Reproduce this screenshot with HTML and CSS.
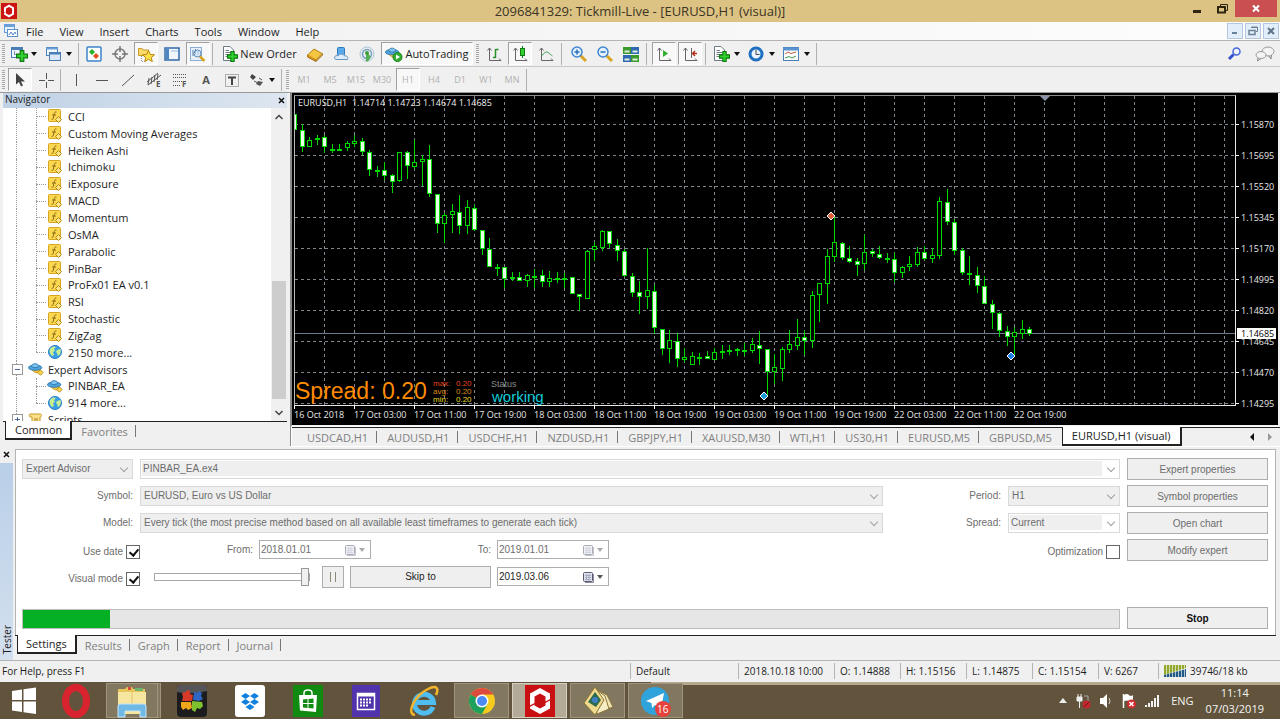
FILE: index.html
```html
<!DOCTYPE html>
<html lang="en">
<head>
    <meta charset="UTF-8">
    <meta name="viewport" content="width=device-width, initial-scale=1.0">
    <title>2096841329: Tickmill-Live - [EURUSD,H1 (visual)]</title>
    <link rel="stylesheet" href="styles.css">
</head>
<body>
    <!-- shared icons -->
    <svg class="defs" aria-hidden="true">
        <symbol id="i-logo" viewBox="0 0 16 16">
            <rect width="16" height="16" fill="#cc1414"/>
            <path d="M8 1.5 13 4.5V8L11 7V5.6L8 3.9 5 5.6V8.5L3 9.6V4.5Z" fill="#fff"/>
            <path d="M8 14.5 3 11.5V10L5 9V10.4L8 12.1 11 10.4V7.5L13 6.4V11.5Z" fill="#fff"/>
            <circle cx="8" cy="8" r="1.8" fill="#cc1414"/>
        </symbol>
        <symbol id="i-func" viewBox="0 0 16 16">
            <rect x="1.5" y="1.5" width="12" height="12" rx="1" fill="#fbd84f" stroke="#d9a520"/>
            <path d="M9.5 4C8 3.4 7.4 4.6 7 7L6.4 10C6.1 11.4 5.5 11.6 4.6 11.3M5 7H9" fill="none" stroke="#8a6a18"/>
            <path d="M11.5 8.5 14.5 11.5 11.5 14.5 8.5 11.5Z" fill="#fbe58a" stroke="#b8860b"/>
        </symbol>
        <symbol id="i-globe" viewBox="0 0 16 16">
            <circle cx="8" cy="8" r="6.5" fill="#3aa0e6" stroke="#2a7fc4"/>
            <path d="M3 5C5 2 8 2 9 3L7 5 8 7 6 8 7 11 5 12C3 10 2 8 3 5ZM10 6 13.5 5C14.5 8 13 11 11 12L10 9 9 8Z" fill="#c9ee8f"/>
        </symbol>
        <symbol id="i-expert" viewBox="0 0 18 16">
            <path d="M4 8C6 12 11 14 14 11L13 7Z" fill="#f3c63c" stroke="#c9951a"/>
            <ellipse cx="8" cy="6.5" rx="7.5" ry="3" fill="#4fa3dc" stroke="#2d77ad"/>
            <path d="M4 5C4 1 12 1 12 5C10 7 6 7 4 5Z" fill="#7cc3ef" stroke="#2d77ad"/>
            <path d="M14 9 17 12 14 15 11 12Z" fill="#fbd84f" stroke="#b8860b"/>
        </symbol>
        <symbol id="i-script" viewBox="0 0 16 16">
            <path d="M2 2H12C14 2 14 5 12 5V13C12 14.5 5 14.5 4 13V5H2C1 5 1 2 2 2Z" fill="#fbe08a" stroke="#c99a25"/>
            <path d="M6 7H10M6 9H10" stroke="#a67c1a"/>
        </symbol>
        <symbol id="i-plus" viewBox="0 0 10 10">
            <path d="M3.5 .5H6.5V3.5H9.5V6.5H6.5V9.5H3.5V6.5H.5V3.5H3.5Z" fill="#2fd12f" stroke="#0d7a0d"/>
        </symbol>
        <symbol id="i-page" viewBox="0 0 16 16">
            <path d="M1.5 .5H8L11.5 4V14.5H1.5Z" fill="#fff" stroke="#6b7a86"/>
            <path d="M3.5 4.5H7M3.5 6.5H9M3.5 8.5H9M3.5 10.5H7" stroke="#6b7a86"/>
        </symbol>
        <symbol id="i-calendar" viewBox="0 0 12 12">
            <rect x=".5" y="1.5" width="9" height="9" rx="1" fill="#dfe2ee" stroke="#5a5a70"/>
            <path d="M2 4.5H8M2 6.5H8M2 8.5H8M3.5 3V9.5M6 3V9.5" stroke="#a9adc4"/>
            <path d="M10.5 3V11.5H2" fill="none" stroke="#8a8aa0"/>
        </symbol>
    </svg>

    <header class="titlebar">
        <svg class="titlebar-logo"><use href="#i-logo"/></svg>
        <h1>2096841329: Tickmill-Live - [EURUSD,H1 (visual)]</h1>
        <div class="window-buttons">
            <button aria-label="Minimize"><svg width="24" height="18"><path d="M6 11.5H14" stroke="#2e2612" stroke-width="3"/></svg></button>
            <button aria-label="Restore"><svg width="24" height="18"><path d="M9.5 6V4.5H16.5V10.5H15" fill="none" stroke="#2e2612"/><rect x="7" y="7" width="7" height="5.5" fill="none" stroke="#2e2612" stroke-width="2"/></svg></button>
            <button class="close" aria-label="Close"><svg width="42" height="17"><path d="M18 5.5 24 11.5M24 5.5 18 11.5" stroke="#fff" stroke-width="2"/></svg></button>
        </div>
    </header>

    <nav class="menubar">
        <svg class="menu-icon" viewBox="0 0 16 16">
            <rect x="1.5" y="1.5" width="10" height="8" fill="#eaf3fd" stroke="#6a9fd8"/>
            <path d="M1 3H12" stroke="#6a9fd8" stroke-width="2"/>
            <rect x="4.5" y="6.5" width="10" height="7" fill="#fff" stroke="#5a92d0"/>
            <path d="M6 12 8 9 10 12 12 9 13 11" fill="none" stroke="#4d86c8"/>
        </svg>
        <button>File</button>
        <button>View</button>
        <button>Insert</button>
        <button>Charts</button>
        <button>Tools</button>
        <button>Window</button>
        <button>Help</button>
        <div class="mdi-buttons">
            <button aria-label="Minimize chart"><svg width="14" height="14"><path d="M4 9H9" stroke="#6b8197" stroke-width="2"/></svg></button>
            <button aria-label="Restore chart"><svg width="14" height="14"><path d="M5.5 4V3H11.5V7.5H10M5 3.5H12" fill="none" stroke="#6b8197"/><rect x="3" y="6.5" width="6" height="4" fill="none" stroke="#6b8197" stroke-width="1.5"/></svg></button>
            <button aria-label="Close chart"><svg width="14" height="14"><path d="M4 4 10 10M10 4 4 10" stroke="#5f7489" stroke-width="2"/></svg></button>
        </div>
    </nav>

    <div class="toolbar">
        <span class="grip"></span>
        <button class="tool drop" aria-label="New chart"><svg width="18" height="16"><rect x="1.5" y="1.5" width="11" height="10" fill="#eef5fc" stroke="#4a7fb5"/><path d="M1 3H13" stroke="#4a7fb5" stroke-width="2"/><path d="M4.5 5V9M4 8.5H7" stroke="#7b97b3" fill="none"/><use href="#i-plus" x="6" y="4" width="12" height="12"/></svg></button>
        <button class="tool drop" aria-label="Profiles"><svg width="18" height="16"><rect x="1.5" y="1.5" width="11" height="8" fill="#f4f9ff" stroke="#4a7fb5"/><path d="M1 2.5H13" stroke="#6a9fd8" stroke-width="2"/><rect x="4.5" y="6.5" width="11" height="8" fill="#dce8f6" stroke="#4a7fb5"/><path d="M4 7.5H16" stroke="#4a7fb5" stroke-width="2"/></svg></button>
        <span class="sep"></span>
        <button class="tool" aria-label="Market Watch"><svg width="16" height="16"><rect x="1" y="1" width="14" height="14" rx="1" fill="#fff" stroke="#3d84cc" stroke-width="1.5"/><path d="M6 3 9 6 6 9 3 6Z" fill="#27b127"/><path d="M10 7 13 10 10 13 7 10Z" fill="#e0501e"/></svg></button>
        <button class="tool" aria-label="Data Window"><svg width="16" height="16"><circle cx="8" cy="8" r="5" fill="none" stroke="#777" stroke-width="1.5"/><path d="M8 0V6M8 10V16M0 8H6M10 8H16" stroke="#777" stroke-width="1.5"/></svg></button>
        <button class="tool pressed" aria-label="Navigator"><svg width="18" height="16"><path d="M1.5 2.5H5L6 4H11.5V9.5H1.5Z" fill="#fbdc6a" stroke="#c99a25"/><path d="M4.5 10V15.5H8" stroke="#999" stroke-dasharray="1 1" fill="none"/><path d="M11.5 4.5 13.3 8.4 17.5 8.8 14.3 11.5 15.3 15.5 11.5 13.3 7.8 15.5 8.7 11.5 5.5 8.8 9.8 8.4Z" fill="#ffe04a" stroke="#b8860b"/></svg></button>
        <button class="tool" aria-label="Terminal"><svg width="16" height="16"><rect x="1" y="2" width="14" height="12" fill="#f0f6fd" stroke="#2f68a8" stroke-width="1.5"/><rect x="2" y="3" width="3" height="10" fill="#4e86c2"/><path d="M7 5H14" stroke="#9cbbe0"/></svg></button>
        <button class="tool pressed" aria-label="Strategy Tester"><svg width="18" height="16"><rect x="1.5" y="1.5" width="11" height="13" fill="#e8f1fb" stroke="#8aaed4"/><path d="M4 4V10M6.5 3V8M9 5V9" stroke="#557a9f"/><circle cx="8.5" cy="7.5" r="3.5" fill="#d6eafe" fill-opacity=".6" stroke="#5b87b5"/><path d="M11 10.5 15.5 15" stroke="#d9a520" stroke-width="2.5"/></svg></button>
        <span class="sep"></span>
        <button class="tool wide"><svg width="16" height="16"><use href="#i-page" width="16" height="16"/><use href="#i-plus" x="5" y="5" width="11" height="11"/></svg>New Order</button>
        <button class="tool" aria-label="MetaEditor"><svg width="16" height="16"><path d="M.5 9 7 3 15 7.5 9 14Z" fill="#f5c542" stroke="#b57f14"/><path d="M.5 9V11L9 15.5V14M9 15.5 15.5 9V7.5" fill="#d8951f" stroke="#a56e10"/></svg></button>
        <button class="tool" aria-label="Community"><svg width="16" height="16"><rect x="4.5" y="1.5" width="7" height="8" rx="1" fill="#5aa9e8" stroke="#2f78ba"/><path d="M1.5 12C1.5 9.5 4 9 5 10C6 7.5 11 7.5 11.5 10C14 9.5 15.5 11 14.5 13.5H2.5Z" fill="#dcecfa" stroke="#6a95bd"/></svg></button>
        <button class="tool" aria-label="Signals"><svg width="16" height="16"><circle cx="8" cy="8" r="7" fill="none" stroke="#a9c3d6"/><circle cx="8" cy="8" r="4.5" fill="none" stroke="#6f9cc0" stroke-width="1.5"/><path d="M8 6 12 11 9 15.5 7 15.5V9Z" fill="#53b053"/><circle cx="8" cy="7" r="2" fill="#3d9a3d"/></svg></button>
        <button class="tool wide pressed auto"><svg width="18" height="16"><use href="#i-expert" width="16" height="15"/><circle cx="12.5" cy="11" r="4.5" fill="#2fae2f" stroke="#1d7f1d"/><path d="M11 8.5 15 11 11 13.5Z" fill="#fff"/></svg>AutoTrading</button>
        <span class="grip"></span>
        <button class="tool" aria-label="Bar chart"><svg width="16" height="16"><path d="M3.5 2V14.5H15M1.5 4.5 3.5 2 5.5 4.5M13 12.5 15 14.5" fill="none" stroke="#666"/><path d="M9.5 3V12M9.5 3.5H12.5M7 11.5H9.5" stroke="#2a8f2a" stroke-width="1.5"/></svg></button>
        <button class="tool pressed" aria-label="Candlesticks"><svg width="16" height="16"><path d="M3.5 2V14.5H15M1.5 4.5 3.5 2 5.5 4.5M13 12.5 15 14.5" fill="none" stroke="#666"/><path d="M10.5 0V12" stroke="#157a15"/><rect x="8.5" y="2.5" width="4" height="7" fill="#2fd12f" stroke="#157a15"/></svg></button>
        <button class="tool" aria-label="Line chart"><svg width="16" height="16"><path d="M3.5 2V14.5H15M1.5 4.5 3.5 2 5.5 4.5M13 12.5 15 14.5" fill="none" stroke="#666"/><path d="M3.5 10C6 7 8 5 10 6.5S13 9 14.5 10" fill="none" stroke="#3b9a4b"/></svg></button>
        <span class="sep gap"></span>
        <button class="tool" aria-label="Zoom in"><svg width="16" height="16"><path d="M9.5 9.5 15 15" stroke="#d9a520" stroke-width="3"/><circle cx="6" cy="6" r="5" fill="#e3f1fe" stroke="#4187cf" stroke-width="1.5"/><path d="M3.5 6H8.5M6 3.5V8.5" stroke="#2c6fb8" stroke-width="1.5"/></svg></button>
        <button class="tool" aria-label="Zoom out"><svg width="16" height="16"><path d="M9.5 9.5 15 15" stroke="#d9a520" stroke-width="3"/><circle cx="6" cy="6" r="5" fill="#e3f1fe" stroke="#4187cf" stroke-width="1.5"/><path d="M3.5 6H8.5" stroke="#2c6fb8" stroke-width="1.5"/></svg></button>
        <button class="tool" aria-label="Tile windows"><svg width="16" height="16"><rect x="0" y="1" width="8" height="7" fill="#3c9a2c"/><rect x="8" y="1" width="8" height="7" fill="#2f68b0"/><rect x="0" y="9" width="8" height="7" fill="#2f68b0"/><rect x="8" y="9" width="8" height="7" fill="#3c9a2c"/><path d="M1.5 5.5H6.5M9.5 5.5H14.5M1.5 13.5H6.5M9.5 13.5H14.5" stroke="#dff0e0" stroke-width="2"/></svg></button>
        <span class="sep gap"></span>
        <button class="tool pressed" aria-label="Auto scroll"><svg width="16" height="16"><path d="M3.5 2V14.5H15M1.5 4.5 3.5 2 5.5 4.5M13 12.5 15 14.5" fill="none" stroke="#666"/><path d="M7 4 12 7.5 7 11Z" fill="#2fae2f"/></svg></button>
        <button class="tool pressed" aria-label="Chart shift"><svg width="16" height="16"><path d="M3.5 2V14.5H15M1.5 4.5 3.5 2 5.5 4.5M13 12.5 15 14.5M9.5 2V12" fill="none" stroke="#666"/><path d="M15 7.5H11M13 5 10.5 7.5 13 10" fill="none" stroke="#b8321e" stroke-width="1.5"/></svg></button>
        <span class="sep gap"></span>
        <button class="tool drop" aria-label="Indicators"><svg width="18" height="16"><use href="#i-page" width="16" height="16"/><use href="#i-plus" x="6" y="5" width="11" height="11"/></svg></button>
        <button class="tool drop" aria-label="Periods"><svg width="18" height="16"><circle cx="8" cy="8" r="6" fill="#eaf4fe" stroke="#1f6fc0" stroke-width="3"/><path d="M8 4V8.5H11.5" fill="none" stroke="#444"/></svg></button>
        <button class="tool drop" aria-label="Templates"><svg width="18" height="16"><rect x=".5" y="1.5" width="15" height="13" fill="#fff" stroke="#4a7fb5"/><path d="M0 3H16" stroke="#5a94d0" stroke-width="3"/><path d="M2 8 5 6 8 7.5 13 6" fill="none" stroke="#c0603a"/><path d="M2 12 6 10.5 9 12 13 10" fill="none" stroke="#3b9a4b"/></svg></button>
        <span class="sep"></span>
        <div class="toolbar-right">
            <button class="tool" aria-label="Search"><svg width="16" height="16"><circle cx="9.5" cy="5.5" r="3.5" fill="#eef3ff" stroke="#4668d8" stroke-width="1.5"/><path d="M6.5 8.5 2 13" stroke="#3552cc" stroke-width="3"/></svg></button>
            <button class="tool" aria-label="Chat"><svg width="20" height="16"><ellipse cx="13" cy="5.5" rx="6" ry="4.5" fill="#f4f4f4" stroke="#999"/><path d="M14 10 16 13 16.5 9" fill="#ddd" stroke="#888"/><ellipse cx="6" cy="9" rx="5" ry="3.5" fill="#f4f4f4" stroke="#999"/><path d="M3 12 2.5 15 6 12.5" fill="#ddd" stroke="#888"/></svg></button>
        </div>
    </div>

    <div class="toolbar second">
        <span class="grip"></span>
        <button class="tool pressed" aria-label="Cursor"><svg width="16" height="16"><path d="M4 1V12.5L7 10 9 14.5 11 13.5 9 9.5H13Z" fill="#444"/></svg></button>
        <button class="tool" aria-label="Crosshair"><svg width="16" height="16"><path d="M8.5 1V7M8.5 10V16M1 8.5H7M10 8.5H16" stroke="#555"/></svg></button>
        <span class="sep"></span>
        <button class="tool" aria-label="Vertical line"><svg width="16" height="16"><path d="M8.5 2V14" stroke="#555"/></svg></button>
        <button class="tool" aria-label="Horizontal line"><svg width="16" height="16"><path d="M2 8.5H14" stroke="#555"/></svg></button>
        <button class="tool" aria-label="Trendline"><svg width="16" height="16"><path d="M2 14 14 3" stroke="#555"/></svg></button>
        <button class="tool" aria-label="Equidistant channel"><svg width="16" height="16"><path d="M1 10 12 1M2 13 15 3M3 6 2 13M6 5 5 12M9 3 8 10M12 2 11 8" stroke="#555"/><text x="10" y="15" font-size="8">E</text></svg></button>
        <button class="tool" aria-label="Fibonacci"><svg width="16" height="16"><path d="M1 2.5H15M1 5.5H15M1 9.5H15M1 13.5H9" stroke="#555" stroke-dasharray="1 1"/><text x="10" y="15" font-size="8">F</text></svg></button>
        <button class="tool letter">A</button>
        <button class="tool" aria-label="Text label"><svg width="16" height="16"><rect x="1.500" y="2.500" width="13" height="12" fill="none" stroke="#666" stroke-dasharray="1 1"/><path d="M4 5.500H12M8 5V13" stroke="#444" stroke-width="2"/></svg></button>
        <button class="tool drop" aria-label="Arrows"><svg width="18" height="16"><path d="M4 2 8 5 5 8 2 5Z" fill="#444"/><path d="M6 9 10 11M11 6 14 8" stroke="#555"/><path d="M10 9 15 10 12 14 8 12Z" fill="#555"/></svg></button>
        <span class="sep"></span>
        <span class="grip"></span>
        <button class="tool period">M1</button>
        <button class="tool period">M5</button>
        <button class="tool period">M15</button>
        <button class="tool period">M30</button>
        <button class="tool period pressed">H1</button>
        <button class="tool period">H4</button>
        <button class="tool period">D1</button>
        <button class="tool period">W1</button>
        <button class="tool period">MN</button>
        <span class="sep"></span>
    </div>

    <main class="workspace">
        <aside class="navigator">
            <div class="panel-head"><h2>Navigator</h2><button aria-label="Close Navigator"><svg width="7" height="7"><path d="M1 1 6 6M6 1 1 6" stroke="#111" stroke-width="1.5"/></svg></button></div>
            <div class="tree-wrap">
                <ul class="tree">
                    <li class="leaf"><svg><use href="#i-func"/></svg>CCI</li>
                    <li class="leaf"><svg><use href="#i-func"/></svg>Custom Moving Averages</li>
                    <li class="leaf"><svg><use href="#i-func"/></svg>Heiken Ashi</li>
                    <li class="leaf"><svg><use href="#i-func"/></svg>Ichimoku</li>
                    <li class="leaf"><svg><use href="#i-func"/></svg>iExposure</li>
                    <li class="leaf"><svg><use href="#i-func"/></svg>MACD</li>
                    <li class="leaf"><svg><use href="#i-func"/></svg>Momentum</li>
                    <li class="leaf"><svg><use href="#i-func"/></svg>OsMA</li>
                    <li class="leaf"><svg><use href="#i-func"/></svg>Parabolic</li>
                    <li class="leaf"><svg><use href="#i-func"/></svg>PinBar</li>
                    <li class="leaf"><svg><use href="#i-func"/></svg>ProFx01 EA v0.1</li>
                    <li class="leaf"><svg><use href="#i-func"/></svg>RSI</li>
                    <li class="leaf"><svg><use href="#i-func"/></svg>Stochastic</li>
                    <li class="leaf"><svg><use href="#i-func"/></svg>ZigZag</li>
                    <li class="leaf last"><svg><use href="#i-globe"/></svg>2150 more...</li>
                    <li class="branch"><svg><use href="#i-expert"/></svg>Expert Advisors</li>
                    <li class="leaf"><svg><use href="#i-expert"/></svg>PINBAR_EA</li>
                    <li class="leaf last"><svg><use href="#i-globe"/></svg>914 more...</li>
                    <li class="branch closed"><svg><use href="#i-script"/></svg>Scripts</li>
                </ul>
                <div class="scrollbar">
                    <svg width="10" height="8"><path d="M1.5 6 5 2.5 8.5 6" fill="none" stroke="#444" stroke-width="1.5"/></svg>
                    <span class="thumb"></span>
                    <svg width="10" height="8"><path d="M1.5 2 5 5.5 8.5 2" fill="none" stroke="#444" stroke-width="1.5"/></svg>
                </div>
            </div>
            <div class="tabs nav-tabs">
                <button class="tab active">Common</button>
                <button class="tab">Favorites</button>
            </div>
        </aside>

        <section class="chart-area">
            <div class="chart">
                <div class="plot">
                    <svg class="plot-svg">
                        <g transform="translate(-295 -96)">
                            <g id="grid"></g>
                            <path d="M295 333.5H3000" stroke="#6c7c8c"/>
                            <g id="candles"></g>
                            <path d="M1040 96H1050L1045 101Z" fill="#8c93a8"/>
                            <g stroke="#fff">
                                <path d="M831 212 835 216 831 220 827 216Z" fill="#e0603c"/>
                                <path d="M764 392 768 396 764 400 760 396Z" fill="#1b9ad6"/>
                                <path d="M1011 352 1015 356 1011 360 1007 356Z" fill="#1e7fe0"/>
                            </g>
                            <text class="quote" x="298" y="106">EURUSD,H1&#160; 1.14714 1.14723 1.14674 1.14685</text>
                            <text class="spread" x="295" y="399">Spread: 0.20</text>
                            <g class="stat">
                                <text x="433" y="386" fill="#e8421a">max:</text><text x="456" y="386" fill="#e8421a">0.20</text>
                                <text x="433" y="394" fill="#dc8a12">avg:</text><text x="456" y="394" fill="#dc8a12">0.20</text>
                                <text x="433" y="402" fill="#e6dc1e">min:</text><text x="456" y="402" fill="#e6dc1e">0.20</text>
                            </g>
                            <text class="status-label" x="491" y="387">Status</text>
                            <text class="status-value" x="492" y="402">working</text>
                        </g>
                    </svg>
                </div>
                <div class="price-axis">
                    <span>1.15870</span><span>1.15695</span><span>1.15520</span><span>1.15345</span><span>1.15170</span>
                    <span>1.14995</span><span>1.14820</span><span>1.14645</span><span>1.14470</span><span>1.14295</span>
                    <b class="price-now">1.14685</b>
                </div>
                <div class="time-axis">
                    <span>16 Oct 2018</span><span>17 Oct 03:00</span><span>17 Oct 11:00</span><span>17 Oct 19:00</span>
                    <span>18 Oct 03:00</span><span>18 Oct 11:00</span><span>18 Oct 19:00</span><span>19 Oct 03:00</span>
                    <span>19 Oct 11:00</span><span>19 Oct 19:00</span><span>22 Oct 03:00</span><span>22 Oct 11:00</span><span>22 Oct 19:00</span>
                </div>
            </div>
            <div class="tabs chart-tabs">
                <button class="tab">USDCAD,H1</button>
                <button class="tab">AUDUSD,H1</button>
                <button class="tab">USDCHF,H1</button>
                <button class="tab">NZDUSD,H1</button>
                <button class="tab">GBPJPY,H1</button>
                <button class="tab">XAUUSD,M30</button>
                <button class="tab">WTI,H1</button>
                <button class="tab">US30,H1</button>
                <button class="tab">EURUSD,M5</button>
                <button class="tab plain">GBPUSD,M5</button>
                <button class="tab active">EURUSD,H1 (visual)</button>
                <div class="tab-scroll">
                    <svg width="6" height="8"><path d="M5 0V8L1 4Z" fill="#111"/></svg>
                    <svg width="6" height="8"><path d="M1 0V8L5 4Z" fill="#999"/></svg>
                </div>
            </div>
        </section>
    </main>

    <section class="tester">
        <div class="rail">
            <button aria-label="Close Tester"><svg width="7" height="7"><path d="M1 1 6 6M6 1 1 6" stroke="#111" stroke-width="1.5"/></svg></button>
            <h2>Tester</h2>
        </div>
        <div class="tester-body">
            <form class="settings">
                <div class="fields">
                    <div class="row">
                        <span class="select kind"><select aria-label="Type" disabled><option>Expert Advisor</option></select></span>
                        <span class="select grow white"><select aria-label="Expert" disabled><option>PINBAR_EA.ex4</option></select></span>
                    </div>
                    <div class="row">
                        <label class="caption" for="symbol">Symbol:</label>
                        <span class="select grow"><select id="symbol" disabled><option>EURUSD, Euro vs US Dollar</option></select></span>
                        <label class="caption" for="period">Period:</label>
                        <span class="select small"><select id="period" disabled><option>H1</option></select></span>
                    </div>
                    <div class="row">
                        <label class="caption" for="model">Model:</label>
                        <span class="select grow"><select id="model" disabled><option>Every tick (the most precise method based on all available least timeframes to generate each tick)</option></select></span>
                        <label class="caption" for="spread">Spread:</label>
                        <span class="select small white"><select id="spread" disabled><option>Current</option></select></span>
                    </div>
                    <div class="row dates">
                        <label class="check">Use date <input type="checkbox" checked></label>
                        <label class="caption" for="from">From:</label>
                        <span class="date off"><input id="from" type="text" value="2018.01.01" disabled><svg width="12" height="12"><use href="#i-calendar"/></svg></span>
                        <label class="caption to" for="to">To:</label>
                        <span class="date off"><input id="to" type="text" value="2019.01.01" disabled><svg width="12" height="12"><use href="#i-calendar"/></svg></span>
                        <label class="check optimize">Optimization <input type="checkbox"></label>
                    </div>
                    <div class="row visual">
                        <label class="check">Visual mode <input type="checkbox" checked></label>
                        <input class="speed" type="range" value="100" aria-label="Speed">
                        <button type="button" class="btn pause" aria-label="Pause"><svg width="8" height="10"><path d="M1.5 0V10M6.5 0V10" stroke="#8b8878"/></svg></button>
                        <button type="button" class="btn skip">Skip to</button>
                        <span class="date"><input type="text" value="2019.03.06" aria-label="Skip to date"><svg width="12" height="12"><use href="#i-calendar"/></svg></span>
                    </div>
                    <progress value="79" max="1000"></progress>
                </div>
                <div class="actions">
                    <button type="button" class="btn" disabled>Expert properties</button>
                    <button type="button" class="btn" disabled>Symbol properties</button>
                    <button type="button" class="btn" disabled>Open chart</button>
                    <button type="button" class="btn" disabled>Modify expert</button>
                    <button type="button" class="btn stop">Stop</button>
                </div>
            </form>
            <div class="tabs tester-tabs">
                <button class="tab active">Settings</button>
                <button class="tab">Results</button>
                <button class="tab">Graph</button>
                <button class="tab">Report</button>
                <button class="tab">Journal</button>
            </div>
        </div>
    </section>

    <footer class="statusbar">
        <span class="help">For Help, press F1</span>
        <span class="cell w108">Default</span>
        <span class="cell w96">2018.10.18 10:00</span>
        <span class="cell w66">O: 1.14888</span>
        <span class="cell w66">H: 1.15156</span>
        <span class="cell w66">L: 1.14875</span>
        <span class="cell w66">C: 1.15154</span>
        <span class="cell w60">V: 6267</span>
        <span class="cell w122"><svg width="22" height="12"><path d="M0 0H22V3L0 10Z" fill="#93a92b"/><path d="M0 12V10L22 4V12Z" fill="#215a86"/><path d="M2.5 0V12M5.5 0V12M8.5 0V12M11.5 0V12M14.5 0V12M17.5 0V12M20.5 0V12" stroke="#f0f0f0" stroke-opacity=".7"/></svg>39746/18 kb</span>
    </footer>

    <div class="taskbar">
        <button class="start" aria-label="Start"><svg width="26" height="32"><path d="M1 6 11 4.5V15H1ZM12.5 4.3 25 2.5V15H12.5ZM1 16.5H11V27L1 25.5ZM12.5 16.5H25V29L12.5 27.2Z" fill="#fff"/></svg></button>
        <button class="app" aria-label="Opera"><svg width="30" height="34"><ellipse cx="15" cy="17" rx="10.5" ry="13.5" fill="none" stroke="#d9232e" stroke-width="7"/></svg></button>
        <button class="app open stack" aria-label="File Explorer"><svg width="32" height="34"><path d="M2 5H9L11 3H16L17 5H29V28H2Z" fill="#e9c65c"/><path d="M12 3H15V6H12Z" fill="#d24a3a"/><path d="M19 4H27V7H19Z" fill="#6db36d"/><path d="M2 8H30V30H2Z" fill="#f7e6a0"/><path d="M16 8V20" stroke="#e0c46a"/><path d="M2 33V22Q2 20 4 20H28Q30 20 30 22V33H24V27H9V33Z" fill="#6fb9e4" stroke="#c7e5f5"/></svg></button>
        <button class="app" aria-label="AVG"><svg width="30" height="34"><rect y="1" width="30" height="32" rx="4" fill="#1c1c1e"/><path d="M0 5Q0 1 4 1H26Q30 1 30 5V7Q15 11 0 8Z" fill="#55555a"/><path d="M5 9 9 8 10 6 13 7 13 10 16 11 15 17 5 17 6 13Z" fill="#d83a2a"/><path d="M17 8 20 9 22 7 25 9 24 12 26 15 22 17 16 16Z" fill="#2f66c4"/><path d="M4 18H14L15 24 11 26 9 24 6 26 4 23Z" fill="#efa81c"/><path d="M15 17 25 18 26 22 23 25 20 24 18 28 15 26Z" fill="#7fc02f"/></svg></button>
        <button class="app" aria-label="Dropbox"><svg width="30" height="34"><rect y="1" width="30" height="32" rx="3" fill="#fff"/><path d="M10.5 9 15 12 10.5 15 6 12ZM19.5 9 24 12 19.5 15 15 12ZM10.5 15 15 18 10.5 21 6 18ZM19.5 15 24 18 19.5 21 15 18ZM15 20 19.5 23 15 26 10.5 23Z" fill="#1081de"/></svg></button>
        <button class="app" aria-label="Store"><svg width="30" height="34"><rect y="1" width="30" height="32" fill="#108a10"/><path d="M11 12V9C11 5 19 5 19 9V12" fill="none" stroke="#fff" stroke-width="1.5"/><path d="M6 11H24L23 28 7 26.5Z" fill="#fff"/><path d="M10 15.5 14.5 15V19H10ZM15.5 15 20.5 14.5V19H15.5ZM10 20H14.5V24L10 23.5ZM15.5 20H20.5V24.6L15.5 24Z" fill="#108a10"/></svg></button>
        <button class="app" aria-label="Calendar"><svg width="30" height="34"><rect x="1" y="1" width="28" height="32" fill="#5133ab"/><rect x="6.5" y="9.5" width="17" height="16" fill="none" stroke="#fff" stroke-width="1.5"/><path d="M6 11H24" stroke="#fff" stroke-width="3"/><path d="M9 15.5H21M9 18.5H21M9 21.5H18" stroke="#fff" stroke-width="2" stroke-dasharray="2 1"/></svg></button>
        <button class="app" aria-label="Internet Explorer"><svg width="32" height="34"><path d="M25 23A9.500 9.500 0 1 1 25.500 18.500H9" fill="none" stroke="#4fbdf0" stroke-width="5"/><path d="M7 31C-2 30 6 12 20 5C29 0 31 5 28 11" fill="none" stroke="#f2b52b" stroke-width="2.500"/></svg></button>
        <button class="app open" aria-label="Chrome"><svg width="30" height="34"><circle cx="15" cy="17" r="13" fill="#f7ca1e"/><path d="M15 17 3.7 10.5A13 13 0 0 1 26.3 10.5L15 10.5Z" fill="#dd4b3e"/><path d="M3.7 10.5A13 13 0 0 0 15 30L20.5 20 15 17Z" fill="#1fa15d"/><circle cx="15" cy="17" r="6.5" fill="#fff"/><circle cx="15" cy="17" r="5" fill="#4c8bf5"/></svg></button>
        <button class="app open current" aria-label="Tickmill MT4"><svg width="30" height="32"><rect width="30" height="32" fill="#c80f12"/><path d="M15 3 25 8.5V14L20.5 16.5V11.5L15 8.5 9.5 11.5V18L5 20.5V8.5Z" fill="#fff"/><path d="M15 29 5 23.5V22L9.5 19.5V20.5L15 23.5 20.5 20.5V18L25 15.5V23.5Z" fill="#fff"/></svg></button>
        <button class="app open" aria-label="MetaEditor"><svg width="32" height="34"><path d="M13 5 25 11 31 23 17 28Z" fill="#f1e4b5" stroke="#8b7436"/><path d="M12 4 23 12 27 25 15 30Z" fill="#f7edc4" stroke="#8b7436"/><path d="M13 3 22 16 13 31 2 19Z" fill="#efd98c" stroke="#8b7436"/><path d="M13 8 19 16 14 23 6 18Z" fill="#2e6b4c"/><circle cx="13" cy="16" r="3" fill="#3d80c4"/></svg></button>
        <button class="app open" aria-label="Telegram"><svg width="32" height="34"><circle cx="15" cy="17" r="14" fill="#2fa3dc"/><path d="M6 17 24 9 21 25 15 21 12 24 11.5 19Z" fill="#fff"/><circle cx="23" cy="25" r="8" fill="#e6413c"/><text x="17" y="29" fill="#fff" font-size="10">16</text></svg></button>
        <div class="tray">
            <svg width="8" height="5"><path d="M0 5 4 0 8 5Z" fill="#eee"/></svg>
            <svg width="16" height="16"><path d="M2 4H7V8H2ZM3 1V4M6 1V4M4.5 8V15" fill="#eee" stroke="#eee"/><path d="M9 3H13V9" fill="none" stroke="#aaa"/><circle cx="11.5" cy="11.5" r="4" fill="#c1272d"/><path d="M9 14 14 9" stroke="#6d1216"/></svg>
            <svg width="14" height="16"><path d="M1 5H4L8 1V15L4 11H1Z" fill="#fff"/><path d="M10 5Q12 8 10 11" fill="none" stroke="#ccc"/></svg>
            <svg width="16" height="16"><path d="M2.5 1V15" stroke="#fff" stroke-width="1.5"/><path d="M3 2Q6 0 8 2T12 2V8Q9 9 8 8T3 8Z" fill="#fff"/><circle cx="10.5" cy="11" r="4.5" fill="#d02a2e"/><path d="M8.5 9 12.5 13M12.5 9 8.5 13" stroke="#fff" stroke-width="1.5"/></svg>
            <svg width="14" height="14"><path d="M1 11V13M4 9V13M7 7V13M10 4V13M13 1V13" stroke="#f4f4f4" stroke-width="2"/></svg>
            <span class="lang">ENG</span>
            <div class="clock"><time>11:14</time><span>07/03/2019</span></div>
        </div>
    </div>

    <script src="script.js"></script>
</body>
</html>
```
FILE: styles.css
```css
* {
    box-sizing: border-box;
}

body {
    margin: 0;
    min-height: 100vh;
    display: flex;
    flex-direction: column;
    background: #f0f0f0;
    color: #1e1e1e;
    font-family: "Open Sans", "Noto Sans", sans-serif;
    font-size: 11px;
    overflow-x: hidden;
}

button {
    font: inherit;
    color: inherit;
    background: none;
    border: 0;
    padding: 0;
}

h1, h2 {
    margin: 0;
    font-weight: normal;
}

svg {
    flex: none;
    display: block;
}

.defs {
    position: absolute;
    width: 0;
    height: 0;
}

/* title and menu */
.titlebar {
    height: 22px;
    display: grid;
    grid-template-columns: 1fr auto 1fr;
    background: #dcc383;
    color: #3b3424;
}

.titlebar h1 {
    font-size: 13px;
    line-height: 22px;
}

.titlebar-logo {
    width: 16px;
    height: 16px;
    margin: 3px 1px;
}

.window-buttons {
    display: flex;
    justify-content: flex-end;
    align-items: flex-start;
    padding-right: 3px;
}

.window-buttons .close {
    background: #c94f50;
}

.menubar {
    height: 19px;
    display: flex;
    align-items: center;
    gap: 16px;
    padding-left: 3px;
    background: linear-gradient(to right, #f0f0f0, #fdfdfd);
    border-bottom: 1px solid #b4b4b4;
}

.menu-icon {
    width: 16px;
    height: 16px;
    margin-right: -9px;
}

.mdi-buttons {
    display: flex;
    gap: 2px;
    margin-left: auto;
    padding-right: 1px;
}

.mdi-buttons button {
    background: #e2eefa;
    border: 1px solid #b3c8de;
}

/* toolbars */
.toolbar {
    height: 26px;
    display: flex;
    align-items: center;
    background: #f0f0f0;
    border-bottom: 1px solid #c8c8c8;
}

.toolbar.second {
    height: 25px;
    border-bottom: 0;
}

.grip {
    width: 3px;
    height: 20px;
    margin: 0 2px;
    background: repeating-linear-gradient(#a8a8a8 0 1px, #f0f0f0 1px 2px);
}

.sep {
    width: 1px;
    height: 22px;
    margin: 0 2px 0 1px;
    background: #b0b0b0;
}

.sep.gap {
    margin: 0 4px 0 2px;
}

.tool {
    width: 24px;
    height: 23px;
    margin: 0 1px;
    display: flex;
    align-items: center;
    justify-content: center;
    border: 1px solid transparent;
}

.tool text {
    font-weight: bold;
    fill: #555;
}

.tool.drop {
    width: 33px;
    justify-content: flex-start;
    gap: 3px;
    padding-left: 1px;
}

.tool.drop::after {
    content: "";
    border: 3px solid transparent;
    border-top: 4px solid #111;
    border-bottom: 0;
}

.tool.wide {
    width: 85px;
    gap: 2px;
    padding-left: 2px;
    white-space: nowrap;
}

.tool.auto {
    width: 92px;
    padding-left: 0;
}

.tool.pressed {
    background: #f8f8f8;
    border-color: #a0a0a0 #fff #fff #a0a0a0;
}

.tool.letter {
    font-weight: bold;
    color: #555;
}

.tool.period {
    font-size: 9px;
    color: #b0b0b0;
}

.toolbar-right {
    display: flex;
    gap: 4px;
    margin-left: auto;
    padding-right: 2px;
}

/* tabs shared by all panels */
.tabs {
    display: flex;
    color: #808080;
    border-top: 1px solid #222;
}

.tab {
    position: relative;
    height: 18px;
    padding: 0 11px;
    line-height: 17px;
    white-space: nowrap;
}

.tab::after {
    content: "";
    position: absolute;
    right: 0;
    top: 3px;
    height: 12px;
    border-right: 1px solid #777;
}

.tab.plain::after,
.tab.active::after {
    display: none;
}

.tab.active {
    margin-top: -1px;
    height: 19px;
    padding: 0 9px;
    background: #fff;
    color: #1e1e1e;
    border: 1px solid #222;
    border-top: 0;
    border-right-width: 2px;
    border-bottom-width: 2px;
}

/* navigator */
.workspace {
    display: flex;
    border-top: 1px solid #999;
}

.navigator {
    width: 290px;
    flex: none;
    padding: 0 3px;
}

.panel-head {
    height: 15px;
    display: flex;
    align-items: center;
    justify-content: space-between;
    padding: 0 2px;
    background: linear-gradient(to right, #c0d2e6, #dde6f0);
}

.panel-head h2 {
    font-size: 10px;
    line-height: 13px;
    margin-bottom: 2px;
}

.tree-wrap {
    height: 313px;
    display: flex;
    background: #fff;
    overflow: hidden;
}

.tree {
    flex: 1;
    height: 320px;
    margin: 0;
    padding: 0 0 0 13px;
    list-style: none;
    display: flex;
    flex-direction: column;
}

.tree li {
    position: relative;
    flex: 1;
    display: flex;
    align-items: center;
    gap: 5px;
    border-left: 1px dotted #999;
}

.tree svg {
    width: 16px;
    height: 16px;
}

.tree .leaf {
    padding-left: 30px;
}

.tree .branch {
    padding-left: 11px;
    gap: 4px;
}

/* dotted connectors */
.leaf::before,
.leaf::after {
    content: "";
    position: absolute;
    left: 19px;
    top: 0;
    bottom: 0;
    border-left: 1px dotted #999;
}

.leaf::after {
    width: 10px;
    top: 50%;
    border-left: 0;
    border-top: 1px dotted #999;
}

.leaf.last::before {
    bottom: 50%;
}

.branch::before {
    content: "";
    position: absolute;
    left: -5px;
    width: 9px;
    height: 9px;
    border: 1px solid #999;
    background: linear-gradient(#47679b, #47679b) center / 5px 1px no-repeat #fff;
}

.branch.closed::before {
    background:
        linear-gradient(#47679b, #47679b) center / 5px 1px no-repeat,
        linear-gradient(#47679b, #47679b) center / 1px 5px no-repeat #fff;
}

.scrollbar {
    width: 16px;
    display: flex;
    flex-direction: column;
    align-items: center;
    background: #f0f0f0;
    padding: 5px 1px 4px;
}

.scrollbar .thumb {
    width: 14px;
    height: 118px;
    margin-top: auto;
    margin-bottom: 10px;
    background: #cdcdcd;
}

.nav-tabs {
    padding-left: 2px;
}

.nav-tabs .tab {
    padding: 0 8px 0 9px;
}

/* chart */
.chart-area {
    flex: 1;
    min-width: 0;
    border-left: 2px solid #8a8a8a;
}

.chart {
    display: grid;
    grid-template-columns: 1fr 42px;
    padding: 2px 0 0 2px;
    margin-right: 2px;
    background: #000;
    color: #e8e8e8;
    font-size: 9px;
}

.plot {
    height: 311px;
    border: 1px solid #e8e8e8;
    border-top-color: #8c8c8c;
    border-left-color: #b8b8b8;
    overflow: hidden;
}

.plot-svg {
    width: 100%;
    height: 100%;
}

.grid-line {
    stroke: #80868e;
    stroke-dasharray: 3 3;
}

.candle {
    stroke: #00d800;
    fill: #000;
}

.candle.down {
    fill: #e6ffe6;
}

.quote {
    fill: #f0f0f0;
}

.spread,
.stat,
.status-label,
.status-value {
    font-family: "Liberation Sans", sans-serif;
}

.spread {
    font-size: 23px;
    fill: #ff8c00;
}

.stat {
    font-size: 8px;
}

.status-label {
    font-size: 9px;
    fill: #8a8a8a;
}

.status-value {
    font-size: 15px;
    fill: #12ccd8;
}

.price-axis {
    position: relative;
    display: flex;
    flex-direction: column;
    padding-top: 14px;
    height: 311px;
}

.price-axis span {
    height: 31px;
    flex: none;
    line-height: 31px;
    display: flex;
}

.price-axis span::before {
    content: "";
    width: 3px;
    height: 1px;
    margin: 15px 2px 0 0;
    background: #fff;
}

.price-now {
    position: absolute;
    left: 1px;
    right: 2px;
    top: 233px;
    height: 11px;
    padding-left: 4px;
    line-height: 11px;
    font-weight: normal;
    background: #fff;
    color: #000;
}

.time-axis {
    grid-column: 1 / -1;
    height: 19px;
    display: flex;
    overflow: hidden;
    white-space: nowrap;
}

.time-axis span {
    flex: none;
    width: 60px;
    line-height: 17px;
    background: linear-gradient(#fff, #fff) 0 0 / 1px 3px no-repeat;
}

.chart-tabs {
    margin-top: 2px;
    padding-left: 5px;
    outline: 1px solid #fff;
}

.chart-tabs .tab {
    padding: 0 9px 0 10px;
}

.chart-tabs .tab.active {
    margin-left: 1px;
    padding: 0 9px;
}

.tab-scroll {
    display: flex;
    align-items: center;
    gap: 12px;
    margin-left: auto;
    padding-right: 7px;
}

/* tester */
.tester {
    display: flex;
    margin-top: 1px;
    border-bottom: 1px solid #b4b4b4;
}

.rail {
    width: 13px;
    display: flex;
    flex-direction: column;
    align-items: center;
    justify-content: space-between;
    padding: 4px 0 6px;
    background: linear-gradient(to bottom, #f0f0f0 16px, #b9cfe8 16px, #d3e0ee);
}

.rail h2 {
    writing-mode: vertical-rl;
    transform: rotate(180deg);
    font-size: 10px;
    line-height: 12px;
}

.tester-body {
    flex: 1;
    min-width: 0;
    margin: 2px 4px 6px 2px;
}

.settings {
    display: flex;
    gap: 7px;
    padding: 8px 7px 6px 6px;
    background: #fff;
    border: 1px solid #b4b4b4;
    border-bottom: 0;
    color: #6d6d6d;
    font-family: "Liberation Sans", sans-serif;
    font-size: 10px;
}

.fields {
    flex: 1;
    min-width: 0;
}

.row {
    height: 21px;
    margin-bottom: 6px;
    display: flex;
    align-items: center;
    gap: 7px;
}

.caption {
    width: 111px;
    text-align: right;
}

.select {
    position: relative;
    width: 112px;
    height: 20px;
    flex: none;
}

.select.kind {
    width: 111px;
}

.select.grow {
    flex: 1;
}

.select select {
    appearance: none;
    width: 100%;
    height: 100%;
    padding: 0 20px 0 3px;
    font: inherit;
    color: #6d6d6d;
    opacity: 1;
    background: #efefef;
    border: 1px solid #d9d9d9;
    border-radius: 0;
}

.select.white select {
    padding-left: 2px;
    background: linear-gradient(#efefef, #efefef) 1px 1px / calc(100% - 18px) calc(100% - 3px) no-repeat #fff;
}

.select::after {
    content: "";
    position: absolute;
    right: 6px;
    top: 6px;
    width: 5px;
    height: 5px;
    border: solid #a0a0a0;
    border-width: 0 1px 1px 0;
    transform: rotate(45deg);
}

.check {
    width: 118px;
    display: flex;
    align-items: center;
    justify-content: flex-end;
    gap: 3px;
    padding-top: 4px;
}

.check input {
    appearance: none;
    width: 14px;
    height: 14px;
    margin: 0;
    background: #fff;
    border: 1px solid #666;
}

.check input:checked::before {
    content: "";
    display: block;
    width: 4px;
    height: 7px;
    margin: 1px 4px;
    border: solid #111;
    border-width: 0 2px 2px 0;
    transform: rotate(40deg);
}

.dates {
    gap: 0;
}

.dates .caption {
    padding-right: 6px;
    width: 119px;
}

.dates .to {
    width: 126px;
}

.optimize {
    margin-left: auto;
}

.date {
    width: 112px;
    height: 19px;
    flex: none;
    display: flex;
    align-items: center;
    gap: 2px;
    padding-right: 5px;
    background: #fff;
    border: 1px solid #adadad;
    color: #1e1e1e;
}

.date input {
    flex: 1;
    min-width: 0;
    padding: 0 1px;
    border: 0;
    font: inherit;
    color: inherit;
    background: none;
}

.date::after {
    content: "";
    border: 3px solid transparent;
    border-top: 4px solid #555;
    border-bottom: 0;
}

.date.off {
    color: #6d6d6d;
}

.date.off svg,
.date.off::after {
    opacity: .5;
}

.visual {
    gap: 6px;
}

.speed {
    appearance: none;
    width: 156px;
    height: 18px;
    margin: 0 6px 0 8px;
    background: none;
}

.speed::-webkit-slider-runnable-track {
    height: 8px;
    background: #fff;
    border: 1px solid #a8a8a8;
}

.speed::-webkit-slider-thumb {
    appearance: none;
    width: 8px;
    height: 18px;
    margin-top: -6px;
    background: #f0f0f0;
    border: 1px solid #999;
}

.btn {
    height: 22px;
    display: flex;
    align-items: center;
    justify-content: center;
    background: #efefef;
    border: 1px solid #adadad;
}

.pause {
    width: 22px;
}

.skip {
    width: 141px;
    color: #1e1e1e;
}

progress {
    appearance: none;
    display: block;
    width: 100%;
    height: 20px;
    margin-top: 22px;
    border: 1px solid #bcbcbc;
    background: #e6e6e6;
}

progress::-webkit-progress-bar {
    background: #e6e6e6;
}

progress::-webkit-progress-value {
    background: #06b025;
}

.actions {
    width: 141px;
    display: flex;
    flex-direction: column;
    gap: 5px;
}

.actions .stop {
    margin-top: auto;
    color: #111;
    font-weight: bold;
}

.tester-tabs {
    padding-left: 2px;
}

.tester-tabs .tab.active {
    padding: 0 8px;
}

.tester-tabs .tab {
    padding: 0 8px;
}

/* status bar */
.statusbar {
    height: 20px;
    display: flex;
    align-items: center;
    font-size: 10px;
    white-space: nowrap;
}

.help {
    flex: 1;
    padding-left: 2px;
}

.cell {
    height: 16px;
    display: flex;
    align-items: center;
    gap: 4px;
    padding-left: 5px;
    border-left: 1px solid #b4b4b4;
}

.w60 { width: 60px; }
.w66 { width: 66px; }
.w96 { width: 96px; }
.w108 { width: 108px; }
.w122 { width: 122px; }

/* taskbar */
.taskbar {
    height: 37px;
    margin-top: auto;
    display: flex;
    align-items: center;
    background: linear-gradient(#b6a98d, #b6a98d) 651px 0 / 100% 3px no-repeat #62543c;
    color: #f4f4f4;
}

.start {
    width: 48px;
    padding-left: 11px;
}

.app {
    width: 55px;
    height: 35px;
    margin-right: 3px;
    display: flex;
    align-items: center;
    justify-content: center;
    border: 1px solid transparent;
}

.app.open {
    background: #82775f;
    border-color: #a0967f;
}

.app.current {
    background: #b3aa98;
    border-color: #d6d0c2;
}

.app.stack {
    border-right: 4px double #a0967f;
}

.tray {
    display: flex;
    align-items: center;
    gap: 8px;
    margin-left: auto;
    padding-right: 16px;
}

.lang {
    margin: 0 4px;
}

.clock {
    display: flex;
    flex-direction: column;
    align-items: center;
    line-height: 16px;
}
```
FILE: script.js
```javascript
// high, body top, body bottom, low, d = falling / u = rising
const candles = [
    [110, 114, 130, 133, 'd'], [124, 130, 147, 152, 'd'], [137, 140, 147, 147, 'u'], [135, 138, 140, 145, 'u'],
    [135, 137, 147, 153, 'd'], [144, 149, 151, 153, 'd'], [144, 149, 151, 151, 'u'], [141, 143, 148, 151, 'u'],
    [135, 141, 144, 147, 'u'], [138, 141, 152, 155, 'd'], [150, 152, 170, 176, 'd'], [166, 170, 171, 177, 'd'],
    [162, 170, 176, 180, 'd'], [174, 175, 182, 193, 'd'], [152, 152, 181, 182, 'u'], [151, 152, 166, 179, 'd'],
    [140, 162, 167, 169, 'u'], [155, 159, 162, 186, 'u'], [145, 159, 194, 197, 'd'], [194, 194, 224, 233, 'd'],
    [213, 215, 224, 243, 'u'], [204, 211, 215, 233, 'u'], [195, 212, 226, 234, 'd'], [200, 207, 226, 234, 'u'],
    [205, 208, 230, 231, 'd'], [230, 230, 249, 255, 'd'], [238, 249, 267, 267, 'd'], [264, 267, 268, 276, 'd'],
    [267, 267, 279, 288, 'd'], [272, 277, 278, 281, 'd'], [272, 277, 281, 281, 'd'], [274, 275, 281, 287, 'u'],
    [269, 276, 277, 288, 'd'], [270, 275, 282, 287, 'd'], [271, 278, 282, 287, 'u'], [272, 278, 279, 283, 'd'],
    [273, 278, 279, 288, 'd'], [277, 277, 294, 294, 'd'], [294, 294, 297, 311, 'd'], [250, 251, 299, 299, 'u'],
    [242, 246, 250, 261, 'u'], [230, 231, 248, 251, 'u'], [231, 231, 244, 248, 'd'], [239, 245, 251, 261, 'd'],
    [249, 251, 276, 277, 'd'], [273, 276, 293, 297, 'd'], [281, 292, 297, 314, 'd'], [248, 290, 297, 309, 'u'],
    [285, 291, 328, 334, 'd'], [329, 329, 349, 355, 'd'], [330, 340, 349, 363, 'u'], [333, 341, 359, 367, 'd'],
    [348, 357, 360, 362, 'u'], [352, 356, 365, 365, 'u'], [353, 357, 358, 365, 'd'], [351, 356, 359, 359, 'd'],
    [348, 352, 360, 360, 'u'], [345, 351, 352, 359, 'u'], [345, 350, 352, 355, 'u'], [348, 349, 351, 356, 'd'],
    [343, 350, 352, 356, 'u'], [338, 344, 351, 353, 'u'], [331, 345, 349, 364, 'd'], [349, 349, 372, 395, 'd'],
    [354, 367, 372, 384, 'u'], [347, 349, 369, 381, 'u'], [330, 344, 350, 353, 'u'], [319, 337, 346, 350, 'u'],
    [330, 337, 341, 355, 'd'], [291, 295, 341, 348, 'u'], [283, 283, 295, 322, 'u'], [249, 256, 284, 304, 'u'],
    [217, 242, 257, 262, 'u'], [242, 243, 258, 260, 'd'], [246, 258, 262, 263, 'd'], [258, 261, 265, 276, 'd'],
    [235, 252, 264, 270, 'u'], [249, 251, 254, 257, 'd'], [246, 254, 258, 259, 'd'], [253, 258, 259, 263, 'd'],
    [253, 259, 273, 282, 'd'], [266, 267, 273, 278, 'u'], [256, 264, 267, 271, 'u'], [247, 252, 265, 267, 'u'],
    [246, 252, 259, 260, 'd'], [248, 255, 259, 263, 'u'], [197, 201, 256, 259, 'u'], [189, 202, 222, 225, 'd'],
    [219, 222, 251, 255, 'd'], [248, 250, 273, 275, 'd'], [256, 273, 274, 285, 'd'], [267, 275, 286, 293, 'd'],
    [276, 286, 304, 304, 'd'], [300, 304, 313, 329, 'd'], [312, 313, 331, 337, 'd'], [326, 331, 337, 346, 'd'],
    [327, 332, 337, 356, 'u'], [320, 329, 334, 339, 'u'], [327, 329, 334, 336, 'd']
];

const NS = 'http://www.w3.org/2000/svg';

function add(parent, tag, attrs) {
    const el = document.createElementNS(NS, tag);
    for (const key in attrs) el.setAttribute(key, attrs[key]);
    parent.appendChild(el);
}

// Grid covers any window width, the svg clips the rest
const grid = document.getElementById('grid');
for (let x = 324.5; x < 3000; x += 30) {
    add(grid, 'path', { class: 'grid-line', d: `M${x} 96V405` });
}
for (let y = 124.5; y < 405; y += 31) {
    add(grid, 'path', { class: 'grid-line', d: `M295 ${y}H3000` });
}

const group = document.getElementById('candles');
candles.forEach(([high, top, bottom, low, dir], i) => {
    const x = Math.floor(294.7 + i * 7.5) + 0.5;
    add(group, 'path', { class: 'candle', d: `M${x} ${high}V${low}` });
    add(group, 'rect', {
        class: dir === 'd' ? 'candle down' : 'candle',
        x: x - 2, y: top + 0.5, width: 4, height: Math.max(bottom - top - 1, 1)
    });
});
```
